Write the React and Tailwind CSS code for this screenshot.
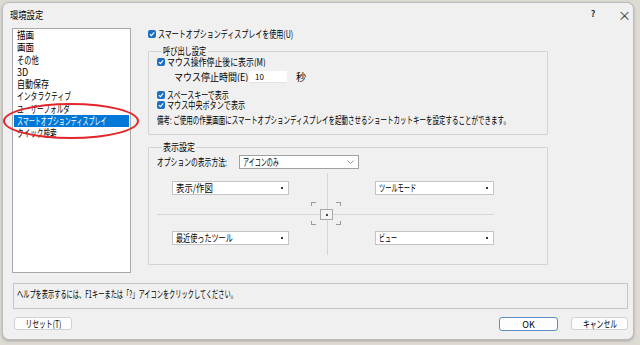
import React from 'react';

const FONT = "font-['Noto_Sans_CJK_JP','Noto_Sans',sans-serif]";

const listItems = [
  ['描画', 'scale-x-[0.85]'],
  ['画面', 'scale-x-[0.85]'],
  ['その他', 'scale-x-[0.72]'],
  ['3D', 'scale-x-[0.9]'],
  ['自動保存', 'scale-x-[0.8]'],
  ['インタラクティブ', 'scale-x-[0.68]'],
  ['ユーザーフォルダ', 'scale-x-[0.67]'],
  ['スマートオプションディスプレイ', 'scale-x-[0.6]'],
  ['クイック検索', 'scale-x-[0.66]'],
];

// Japanese UI font in the shot is much narrower than Noto CJK, so squeeze per line
function T({ s = 'scale-x-[0.7]', center = false, children }) {
  return (
    <span className={`inline-block whitespace-nowrap ${center ? 'origin-center' : 'origin-left'} ${s}`}>
      {children}
    </span>
  );
}

function Check() {
  return (
    <span className="w-[8px] h-[8px] rounded-[2px] bg-[#1a6fc4] flex items-center justify-center shrink-0">
      <svg width="6" height="6" viewBox="0 0 6 6">
        <polyline points="0.8,3.1 2.4,4.6 5.2,1.3" fill="none" stroke="white" strokeWidth="1.1" />
      </svg>
    </span>
  );
}

function CheckRow({ label, s, className = '' }) {
  return (
    <div className={`flex items-center gap-[2px] leading-[10px] ${className}`}>
      <Check />
      <T s={s}>{label}</T>
    </div>
  );
}

function Combo({ label, s, className = '' }) {
  return (
    <div className={`h-[14px] bg-white border border-[#c4c4c4] flex items-center justify-between pl-[3px] pr-[5px] leading-[12px] overflow-hidden ${className}`}>
      <T s={s}>{label}</T>
      <span className="w-[2px] h-[2px] bg-[#333] shrink-0" />
    </div>
  );
}

function Group({ title, legendW, className = '', children }) {
  return (
    <fieldset className={`min-w-0 border border-[#d3d3d3] rounded-[1px] ${className}`}>
      <legend className={`ml-[5px] px-[1px] leading-[10px] ${legendW}`}>{title}</legend>
      {children}
    </fieldset>
  );
}

export default function App() {
  return (
    <div className={`w-[640px] h-[345px] overflow-hidden bg-[#dddbd4] pt-[2px] pl-[2px] pr-[6px] pb-[5px] flex text-[10px] text-black ${FONT}`}>
      <div className="flex-1 flex flex-col bg-[#f0f0f0] rounded-[7px] border border-[#bcbcbc] shadow-[0_1px_3px_rgba(0,0,0,0.25)]">
        {/* title bar */}
        <div className="h-[22px] flex items-center pl-[7px]">
          <T s="scale-x-[0.83]">環境設定</T>
          <span className="ml-auto w-[10px] text-center text-[9px] font-bold text-[#333]">?</span>
          <span className="ml-[20px] mr-[5px] w-[10px] text-center text-[13px] leading-none text-[#333]">×</span>
        </div>

        {/* body */}
        <div className="flex pt-[3px] pl-[9px]">
          <div className="relative">
            <div className="w-[119px] h-[245px] bg-white border border-[#a8a8a8] overflow-hidden">
              {listItems.map(([item, s], i) => (
                <div
                  key={item}
                  className={`h-[12.3px] leading-[12px] pl-[3px] mx-[1px] overflow-hidden ${i === 7 ? 'bg-[#0078d7] text-white' : ''}`}
                >
                  <T s={s}>{item}</T>
                </div>
              ))}
            </div>
            {/* red annotation ellipse */}
            <div className="absolute left-[-9px] top-[75px] w-[136px] h-[36px] rounded-[50%] border-2 border-[#e3262b]" />
          </div>

          <div className="ml-[17px] w-[400px] flex flex-col">
            <CheckRow label="スマートオプションディスプレイを使用(U)" s="scale-x-[0.7]" className="h-[12px] overflow-hidden" />

            <Group title={<T s="scale-x-[0.72]">呼び出し設定</T>} legendW="w-[46px]" className="mt-[6px] pl-[8px] pb-[9px]">
              <CheckRow label="マウス操作停止後に表示(M)" s="scale-x-[0.79]" className="h-[11px] overflow-hidden" />
              <div className="h-[12px] mt-[4px] flex items-center pl-[17px] leading-[10px]">
                <span className="w-[75px] overflow-hidden"><T s="scale-x-[0.9]">マウス停止時間(E)</T></span>
                <div className="w-[38px] h-[12px] bg-white border-b border-[#e4e4e4] pl-[6px] text-[8px] leading-[12px]">10</div>
                <span className="ml-[9px]">秒</span>
              </div>
              <CheckRow label="スペースキーで表示" s="scale-x-[0.7]" className="h-[10px] mt-[7px] overflow-hidden" />
              <CheckRow label="マウス中央ボタンで表示" s="scale-x-[0.71]" className="h-[10px] overflow-hidden" />
              <div className="h-[10px] mt-[5px] leading-[10px] overflow-hidden">
                <T s="scale-x-[0.65]">備考: ご使用の作業画面にスマートオプションディスプレイを起動させるショートカットキーを設定することができます。</T>
              </div>
            </Group>

            <Group title={<T s="scale-x-[0.8]">表示設定</T>} legendW="w-[34px]" className="mt-[7px] pl-[8px] pb-[9px]">
              <div className="h-[14px] mt-[3px] flex items-center leading-[12px]">
                <span className="w-[82px] overflow-hidden"><T s="scale-x-[0.68]">オプションの表示方法:</T></span>
                <div className="w-[120px] h-[14px] bg-white border border-[#a0a0a0] flex items-center justify-between pl-[3px] pr-[4px] overflow-hidden">
                  <T s="scale-x-[0.6]">アイコンのみ</T>
                  <svg width="7" height="4" viewBox="0 0 7 4" className="shrink-0">
                    <polyline points="0.5,0.5 3.5,3.5 6.5,0.5" fill="none" stroke="#777" strokeWidth="0.8" />
                  </svg>
                </div>
              </div>

              <div className="relative h-[82px] mt-[4px] flex flex-col justify-between pt-[8px] pb-[10px]">
                {/* cross guides */}
                <div className="absolute left-[170px] top-0 w-px h-full bg-[#d6d6d6]" />
                <div className="absolute left-0 top-[41px] w-[337px] h-px bg-[#d6d6d6]" />
                <div className="absolute left-[154px] top-[29px] w-[30px] h-[23px]">
                  <div className="absolute left-0 top-0 w-[5px] h-[4px] border-l border-t border-[#9a9a9a]" />
                  <div className="absolute right-0 top-0 w-[5px] h-[4px] border-r border-t border-[#9a9a9a]" />
                  <div className="absolute left-0 bottom-0 w-[5px] h-[4px] border-l border-b border-[#9a9a9a]" />
                  <div className="absolute right-0 bottom-0 w-[5px] h-[4px] border-r border-b border-[#9a9a9a]" />
                </div>
                <div className="absolute left-[163px] top-[36px] w-[13px] h-[11px] bg-[#f4f4f4] border border-[#a8a8a8] flex items-center justify-center">
                  <span className="w-[2px] h-[2px] bg-[#444]" />
                </div>

                <div className="relative flex">
                  <Combo label="表示/作図" s="scale-x-[0.84]" className="ml-[15px] w-[117px]" />
                  <Combo label="ツールモード" s="scale-x-[0.62]" className="ml-[86px] w-[119px]" />
                </div>
                <div className="relative flex">
                  <Combo label="最近使ったツール" s="scale-x-[0.71]" className="ml-[15px] w-[117px]" />
                  <Combo label="ビュー" s="scale-x-[0.6]" className="ml-[86px] w-[119px]" />
                </div>
              </div>
            </Group>
          </div>
        </div>

        {/* help box */}
        <div className="mt-[10px] ml-[10px] mr-[5px] h-[26px] border border-[#c6c6c6] bg-[#f0f0f0] pl-[3px] pt-[4px] leading-[12px] overflow-hidden">
          <T s="scale-x-[0.62]">ヘルプを表示するには、F1キーまたは「?」アイコンをクリックしてください。</T>
        </div>

        {/* buttons */}
        <div className="mt-[8px] flex items-start pl-[11px] pr-[5px] leading-[11px]">
          <button className="w-[58px] h-[13px] bg-[#fdfdfd] border border-[#d2d2d2] rounded-[3px] flex items-center justify-center text-[10px] overflow-hidden">
            <T center s="scale-x-[0.68]">リセット(T)</T>
          </button>
          <button className="ml-auto w-[59px] h-[14px] bg-[#fdfdfd] border border-[#5b8ec4] rounded-[3px] flex items-center justify-center text-[9px]">
            OK
          </button>
          <button className="ml-[13px] w-[57px] h-[13px] bg-[#fdfdfd] border border-[#d2d2d2] rounded-[3px] flex items-center justify-center text-[10px] overflow-hidden">
            <T center s="scale-x-[0.68]">キャンセル</T>
          </button>
        </div>
      </div>
    </div>
  );
}
